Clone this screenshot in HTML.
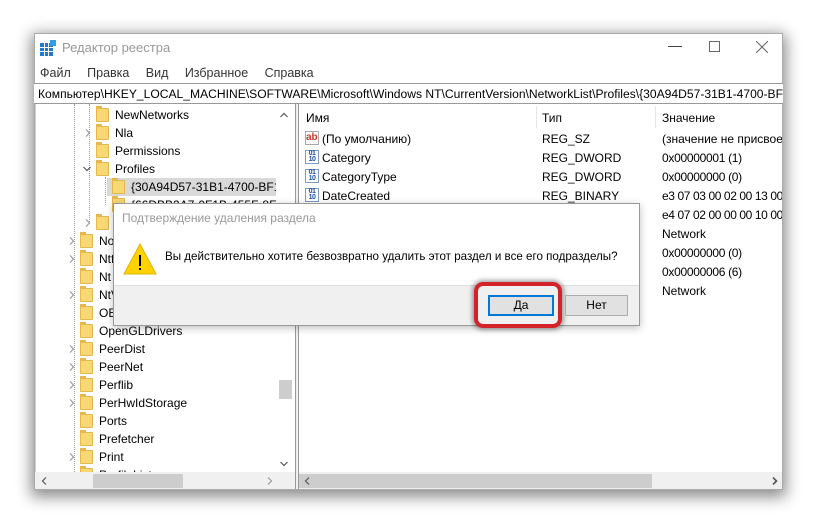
<!DOCTYPE html>
<html><head><meta charset="utf-8"><style>
*{margin:0;padding:0;box-sizing:border-box}
body{width:816px;height:523px;background:#fff;position:relative;overflow:hidden;font-family:"Liberation Sans",sans-serif;font-size:12px;color:#000}
.a{position:absolute;white-space:nowrap}
.win{position:absolute;left:34px;top:33px;width:749px;height:457px;background:#fff;box-shadow:0 4px 14px 3px rgba(0,0,0,.45);border:1px solid #aaa}
.f{position:absolute;width:13px;height:14px;background:#f8d775;border:1px solid #e4b84c;border-radius:1px}
.f:before{content:"";position:absolute;left:-1px;top:-3px;width:6px;height:3px;background:#e4b84c}
.chev{position:absolute;width:8px;height:8px}
.t{position:absolute;font-size:12px;white-space:nowrap}
.ic{position:absolute;width:14px;height:14px;border:1px solid #7a9cc6;background:#fff;font-size:7px;line-height:6px;color:#1d4fa0;font-weight:bold;text-align:center;letter-spacing:-.5px}
.clip{position:absolute;overflow:hidden}
</style></head><body>
<svg width="0" height="0" style="position:absolute"><defs><symbol id="cr" viewBox="0 0 8 8"><path d="M2 0.5L5.5 4L2 7.5" fill="none" stroke="#999" stroke-width="1.2"/></symbol><symbol id="cd" viewBox="0 0 8 8"><path d="M0.5 2L4 5.5L7.5 2" fill="none" stroke="#555" stroke-width="1.2"/></symbol></defs></svg>
<div class="win"></div>
<!-- title -->
<svg class="a" style="left:40px;top:40px" width="16" height="16"><rect x="0" y="3" width="13" height="13" fill="#1e7bd0"/><g stroke="#fff" stroke-width="1"><line x1="4.5" y1="3" x2="4.5" y2="16"/><line x1="8.5" y1="3" x2="8.5" y2="16"/><line x1="0" y1="7.5" x2="13" y2="7.5"/><line x1="0" y1="11.5" x2="13" y2="11.5"/></g><rect x="10" y="0" width="6" height="6" fill="#2aa0e8"/></svg>
<div class="a" style="left:62px;top:40px;font-size:13px;color:#999">Редактор реестра</div>
<div class="a" style="left:668px;top:46px;width:14px;height:1px;background:#444"></div>
<div class="a" style="left:709px;top:41px;width:11px;height:11px;border:1px solid #666"></div>
<svg class="a" style="left:756px;top:41px" width="12" height="12"><path d="M0 0L12 12M12 0L0 12" stroke="#666" stroke-width="1"/></svg>
<div class="a" style="left:40px;top:66px;font-size:12.5px;color:#333;word-spacing:2px">Файл&nbsp;&nbsp;&nbsp;Правка&nbsp;&nbsp;&nbsp;Вид&nbsp;&nbsp;&nbsp;Избранное&nbsp;&nbsp;&nbsp;Справка</div>
<div class="a" style="left:34px;top:83px;width:749px;height:21px;border-top:1px solid #999;border-bottom:1px solid #999;overflow:hidden;background:#fff"><div style="padding:3px 0 0 4px;font-size:12.1px">Компьютер\HKEY_LOCAL_MACHINE\SOFTWARE\Microsoft\Windows NT\CurrentVersion\NetworkList\Profiles\{30A94D57-31B1-4700-BF11-</div></div>
<!-- panes separators -->
<div class="a" style="left:35px;top:104px;width:1px;height:368px;background:#ccc"></div>
<div class="a" style="left:295px;top:104px;width:4px;height:385px;background:#f0f0f0;border-left:1px solid #999;border-right:1px solid #999"></div>
<div class="clip" style="left:36px;top:104px;width:240px;height:368px">
<div style="position:absolute;left:-36px;top:-104px;width:300px;height:480px">
<div class="a" style="left:74px;top:104px;height:368px;border-left:1px dotted #999"></div>
<div class="a" style="left:89px;top:104px;height:118px;border-left:1px dotted #999"></div>
<div class="a" style="left:105px;top:177px;height:28px;border-left:1px dotted #999"></div>
<div class="a" style="left:107px;top:178px;width:170px;height:18px;background:#d9d9d9"></div>
<div class="f" style="left:96px;top:108px"></div><div class="t" style="left:115px;top:108px">NewNetworks</div>
<svg class="chev" style="left:84px;top:129px"><use href="#cr"/></svg><div class="f" style="left:96px;top:126px"></div><div class="t" style="left:115px;top:126px">Nla</div>
<div class="f" style="left:96px;top:144px"></div><div class="t" style="left:115px;top:144px">Permissions</div>
<svg class="chev" style="left:83px;top:165px"><use href="#cd"/></svg><div class="f" style="left:96px;top:162px"></div><div class="t" style="left:115px;top:162px">Profiles</div>
<div class="f" style="left:112px;top:180px"></div><div class="t" style="left:131px;top:180px">{30A94D57-31B1-4700-BF11</div>
<div class="f" style="left:112px;top:198px"></div><div class="t" style="left:131px;top:198px">{66DBB2A7-0F1B-455F-8E74</div>
<svg class="chev" style="left:84px;top:219px"><use href="#cr"/></svg><div class="f" style="left:96px;top:216px"></div>
<svg class="chev" style="left:68px;top:237px"><use href="#cr"/></svg><div class="f" style="left:80px;top:234px"></div><div class="t" style="left:99px;top:234px">NowPlaying</div>
<svg class="chev" style="left:68px;top:255px"><use href="#cr"/></svg><div class="f" style="left:80px;top:252px"></div><div class="t" style="left:99px;top:252px">Ntf</div>
<div class="f" style="left:80px;top:270px"></div><div class="t" style="left:99px;top:270px">Nt</div>
<svg class="chev" style="left:68px;top:291px"><use href="#cr"/></svg><div class="f" style="left:80px;top:288px"></div><div class="t" style="left:99px;top:288px">NtVdm64</div>
<div class="f" style="left:80px;top:306px"></div><div class="t" style="left:99px;top:306px">OEM</div>
<div class="f" style="left:80px;top:324px"></div><div class="t" style="left:99px;top:324px">OpenGLDrivers</div>
<svg class="chev" style="left:68px;top:345px"><use href="#cr"/></svg><div class="f" style="left:80px;top:342px"></div><div class="t" style="left:99px;top:342px">PeerDist</div>
<svg class="chev" style="left:68px;top:363px"><use href="#cr"/></svg><div class="f" style="left:80px;top:360px"></div><div class="t" style="left:99px;top:360px">PeerNet</div>
<svg class="chev" style="left:68px;top:381px"><use href="#cr"/></svg><div class="f" style="left:80px;top:378px"></div><div class="t" style="left:99px;top:378px">Perflib</div>
<svg class="chev" style="left:68px;top:399px"><use href="#cr"/></svg><div class="f" style="left:80px;top:396px"></div><div class="t" style="left:99px;top:396px">PerHwIdStorage</div>
<div class="f" style="left:80px;top:414px"></div><div class="t" style="left:99px;top:414px">Ports</div>
<div class="f" style="left:80px;top:432px"></div><div class="t" style="left:99px;top:432px">Prefetcher</div>
<svg class="chev" style="left:68px;top:453px"><use href="#cr"/></svg><div class="f" style="left:80px;top:450px"></div><div class="t" style="left:99px;top:450px">Print</div>
<div class="f" style="left:80px;top:468px"></div><div class="t" style="left:99px;top:468px">ProfileList</div>
</div></div>
<!-- tree scrollbar -->
<div class="a" style="left:276px;top:104px;width:19px;height:368px;background:#fff"></div>
<svg class="a" style="left:280px;top:111px" width="8" height="8"><path d="M0.5 6L4 2.5L7.5 6" fill="none" stroke="#555" stroke-width="1.2"/></svg>
<div class="a" style="left:279px;top:380px;width:13px;height:19px;background:#cdcdcd"></div>
<svg class="a" style="left:280px;top:460px" width="8" height="8"><use href="#cd"/></svg>
<div class="a" style="left:35px;top:472px;width:260px;height:17px;background:#f0f0f0"></div>
<div class="a" style="left:93px;top:474px;width:90px;height:14px;background:#cdcdcd"></div>
<svg class="a" style="left:40px;top:477px" width="8" height="8"><path d="M6 0.5L2.5 4L6 7.5" fill="none" stroke="#555" stroke-width="1.2"/></svg>
<svg class="a" style="left:266px;top:477px" width="8" height="8"><use href="#cr"/></svg>
<!-- right pane -->
<div class="clip" style="left:299px;top:104px;width:483px;height:368px">
<div style="position:absolute;left:-299px;top:-104px;width:800px;height:480px">
<div class="a" style="left:536px;top:106px;width:1px;height:22px;background:#e5e5e5"></div>
<div class="a" style="left:655px;top:106px;width:1px;height:22px;background:#e5e5e5"></div>
<div class="t" style="left:306px;top:111px">Имя</div>
<div class="t" style="left:542px;top:111px">Тип</div>
<div class="t" style="left:662px;top:111px">Значение</div>
<div class="a" style="left:305px;top:131px;width:14px;height:14px;border:1px solid #aaa;color:#c0392b;font-size:10px;font-weight:bold;line-height:11px">ab</div>
<div class="ic" style="left:305px;top:150px">01<br>10</div>
<div class="ic" style="left:305px;top:169px">01<br>10</div>
<div class="ic" style="left:305px;top:188px">01<br>10</div>
<div class="t" style="left:322px;top:132px">(По умолчанию)</div>
<div class="t" style="left:322px;top:151px">Category</div>
<div class="t" style="left:322px;top:170px">CategoryType</div>
<div class="t" style="left:322px;top:189px">DateCreated</div>
<div class="t" style="left:542px;top:132px">REG_SZ</div>
<div class="t" style="left:542px;top:151px">REG_DWORD</div>
<div class="t" style="left:542px;top:170px">REG_DWORD</div>
<div class="t" style="left:542px;top:189px">REG_BINARY</div>
<div class="t" style="left:662px;top:132px">(значение не присвоено)</div>
<div class="t" style="left:662px;top:151px;letter-spacing:-.3px">0x00000001 (1)</div>
<div class="t" style="left:662px;top:170px;letter-spacing:-.3px">0x00000000 (0)</div>
<div class="t" style="left:662px;top:189px;letter-spacing:-.4px">e3 07 03 00 02 00 13 00</div>
<div class="t" style="left:662px;top:208px;letter-spacing:-.4px">e4 07 02 00 00 00 10 00</div>
<div class="t" style="left:662px;top:227px">Network</div>
<div class="t" style="left:662px;top:246px;letter-spacing:-.3px">0x00000000 (0)</div>
<div class="t" style="left:662px;top:265px;letter-spacing:-.3px">0x00000006 (6)</div>
<div class="t" style="left:662px;top:284px">Network</div>
</div></div>
<div class="a" style="left:299px;top:472px;width:483px;height:17px;background:#f0f0f0"></div>
<div class="a" style="left:299px;top:474px;width:353px;height:14px;background:#cdcdcd"></div>
<svg class="a" style="left:303px;top:477px" width="8" height="8"><path d="M6 0.5L2.5 4L6 7.5" fill="none" stroke="#555" stroke-width="1.2"/></svg>
<svg class="a" style="left:771px;top:477px" width="8" height="8"><path d="M2 0.5L5.5 4L2 7.5" fill="none" stroke="#555" stroke-width="1.6"/></svg>
<!-- dialog -->
<div class="a" style="left:113px;top:203px;width:527px;height:123px;background:#fff;border:1px solid #999;box-shadow:0 2px 8px rgba(0,0,0,.25)"></div>
<div class="a" style="left:114px;top:285px;width:525px;height:40px;background:#f0f0f0;border-top:1px solid #ddd"></div>
<div class="a" style="left:122px;top:211px;font-size:12px;color:#999">Подтверждение удаления раздела</div>
<svg class="a" style="left:123px;top:242px" width="34" height="34"><path d="M17 2L33 32H1Z" fill="#ffd200" stroke="#e0b400"/><rect x="16" y="13" width="2" height="11" fill="#000"/><rect x="16" y="26" width="2" height="2" fill="#000"/></svg>
<div class="a" style="left:165px;top:250px;font-size:11.6px">Вы действительно хотите безвозвратно удалить этот раздел и все его подразделы?</div>
<div class="a" style="left:474px;top:282px;width:88px;height:46px;border:4px solid #d2232a;border-radius:9px;box-shadow:0 0 4px 2px rgba(0,0,0,.35)"></div>
<div class="a" style="left:488px;top:295px;width:66px;height:21px;border:2px solid #0078d7;background:#e1e1e1;text-align:center;font-size:12px;line-height:17px">Да</div>
<div class="a" style="left:565px;top:295px;width:63px;height:21px;border:1px solid #adadad;background:#e1e1e1;text-align:center;font-size:12px;line-height:19px">Нет</div>
</body></html>
